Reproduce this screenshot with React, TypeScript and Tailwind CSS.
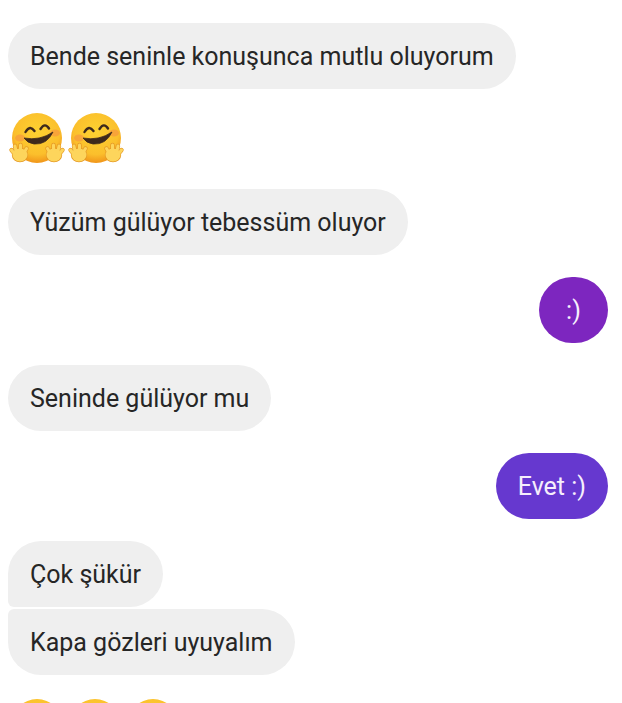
function Hand({ mirror = false }: { mirror?: boolean }) {
  const shape = (color: string, extra: number) => (
    <g stroke={color} fill={color} strokeLinecap="round" strokeLinejoin="round">
      <ellipse cx="12" cy="42" rx="7.5" ry="6.5" strokeWidth={extra} />
      <path d="M5 39 L3.5 37" strokeWidth={3 + extra} fill="none" />
      <path d="M8 38 L7 33" strokeWidth={3 + extra} fill="none" />
      <path d="M12.5 37 L12.5 32" strokeWidth={3 + extra} fill="none" />
      <path d="M16 40 L18.5 35.5" strokeWidth={3 + extra} fill="none" />
    </g>
  );
  return (
    <g transform={mirror ? 'translate(58 0) scale(-1 1)' : undefined}>
      {shape('#e59a26', 1.4)}
      {shape('#fdd55c', 0)}
    </g>
  );
}

function HugEmoji() {
  return (
    <svg width="58" height="52" viewBox="0 0 58 52" className="shrink-0">
      <defs>
        <radialGradient id="hugFace" cx="50%" cy="38%" r="60%">
          <stop offset="0%" stopColor="#fdd231" />
          <stop offset="75%" stopColor="#fbbf2c" />
          <stop offset="100%" stopColor="#f29a1c" />
        </radialGradient>
      </defs>
      <circle cx="29" cy="25" r="25" fill="url(#hugFace)" />
      <ellipse cx="12" cy="25" rx="5" ry="3.5" fill="#f4814a" opacity="0.45" />
      <ellipse cx="47" cy="20" rx="5" ry="3.5" fill="#f4814a" opacity="0.45" />
      <path d="M17.5 19 Q22 11.5 26.5 18" fill="none" stroke="#3e2a1c" strokeWidth="2.4" strokeLinecap="round" />
      <path d="M32.5 16 Q37 9 41 15.5" fill="none" stroke="#3e2a1c" strokeWidth="2.4" strokeLinecap="round" />
      <path d="M16 25 Q32 28 45 19 Q39 32 26 31 Q19 30 16 25 Z" fill="#3e2a1c" stroke="#3e2a1c" strokeWidth="0.8" strokeLinejoin="round" />
      <Hand />
      <Hand mirror />
    </svg>
  );
}

function Incoming({ text, className = 'rounded-[33px]' }: { text: string; className?: string }) {
  return (
    <div className={`self-start shrink-0 h-[66px] flex items-center px-[22px] pt-px bg-[#efefef] text-[#262626] text-[25px] ${className}`}>
      {text}
    </div>
  );
}

function Outgoing({ text, className }: { text: string; className: string }) {
  return (
    <div className={`self-end shrink-0 h-[66px] min-w-[69px] flex items-center justify-center px-[22px] pt-px rounded-[33px] text-[#f6eefc] text-[25px] ${className}`}>
      {text}
    </div>
  );
}

export default function App() {
  return (
    <div className="w-[622px] h-[703px] overflow-hidden bg-white pr-[14px] pl-[8px] pt-[23px] flex flex-col font-['Roboto',sans-serif]">
      <Incoming text="Bende seninle konuşunca mutlu oluyorum" />
      <div className="flex gap-px mt-[24px] shrink-0">
        <HugEmoji />
        <HugEmoji />
      </div>
      <div className="mt-[24px] flex flex-col shrink-0">
        <Incoming text="Yüzüm gülüyor tebessüm oluyor" />
      </div>
      <Outgoing text=":)" className="mt-[22px] bg-[#7d26bf]" />
      <div className="mt-[22px] flex flex-col shrink-0">
        <Incoming text="Seninde gülüyor mu" />
      </div>
      <Outgoing text="Evet :)" className="mt-[22px] bg-[#6638cf]" />
      <div className="mt-[22px] flex flex-col gap-[2px] shrink-0">
        <Incoming text="Çok şükür" className="rounded-[33px] rounded-bl-[6px]" />
        <Incoming text="Kapa gözleri uyuyalım" className="rounded-[33px] rounded-tl-[6px]" />
      </div>
      <div className="flex mt-[24px] shrink-0">
        <HugEmoji />
        <HugEmoji />
        <HugEmoji />
      </div>
    </div>
  );
}
